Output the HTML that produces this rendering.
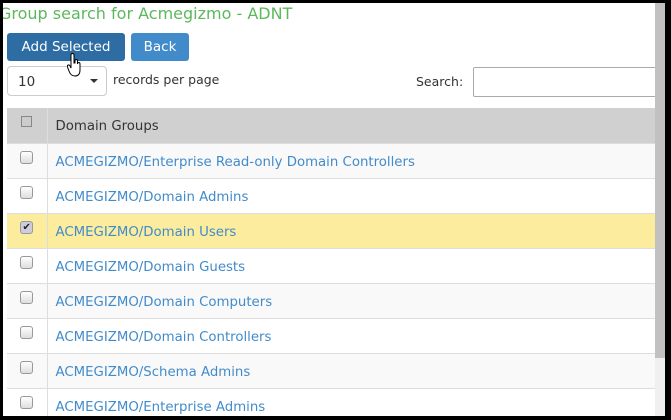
<!DOCTYPE html>
<html><head><style>
*{box-sizing:border-box;margin:0;padding:0}
body{width:671px;height:420px;overflow:hidden;background:#000;font-family:"DejaVu Sans","Liberation Sans",sans-serif;position:relative}
.page{position:absolute;left:3px;top:3px;width:652px;height:413px;background:#fff;overflow:hidden}
.sb{position:absolute;left:655px;top:3px;width:10px;height:413px;background:#f0f0f0}
.sb div{height:355px;background:#c1c1c1}
h1{position:absolute;left:-4px;top:1px;font-size:16px;font-weight:normal;color:#5cb85c;white-space:nowrap}
.btn{position:absolute;top:30px;height:28px;color:#fff;font-size:13.5px;line-height:29px;text-align:center;border-radius:3px}
.sel{position:absolute;left:4px;top:63px;width:100px;height:30px;border:1px solid #ccc;border-radius:4px;font-size:13.5px;line-height:30px;padding-left:10px;color:#333}
.sel:after{content:"";position:absolute;left:82px;top:12px;border:4px solid transparent;border-top:4px solid #333}
.lbl{position:absolute;font-size:12.5px;color:#333}
.search{position:absolute;left:470px;top:64px;width:190px;height:30px;border:1px solid #aaa;border-radius:2px}
table{position:absolute;left:4px;top:105px;width:660px;border-collapse:collapse}
td{height:35px;border-top:1px solid #ddd;font-size:13.3px;color:#428bca;padding-left:8px;padding-top:3px}
td:first-child{width:40px;border-right:1px solid #ddd;padding:0;text-align:center}
tr.h td{background:#d0d0d0;color:#333;border-top:none}
tr.o td{background:#f9f9f9}
tr.y td{background:#fcec9e}
.cb{display:inline-block;width:13px;height:13px;border:1px solid #999;border-radius:3px;background:linear-gradient(#fff,#ddd);vertical-align:middle;position:relative;margin-top:-6px}
</style></head><body>
<div class="page">
<h1>Group search for Acmegizmo - ADNT</h1>
<div class="btn" style="left:4px;width:118px;background:#2e6da4">Add Selected</div>
<div class="btn" style="left:128px;width:58px;background:#428bca">Back</div>
<div class="sel">10</div>
<div class="lbl" style="left:110px;top:69px">records per page</div>
<div class="lbl" style="left:413px;top:71px">Search:</div>
<div class="search"></div>
<table>
<tr class="h"><td><span class="cb" style="background:#ccc;border-color:#888;border-radius:0;width:11px;height:11px"></span></td><td>Domain Groups</td></tr>
<tr class="o"><td><span class="cb"></span></td><td>ACMEGIZMO/Enterprise Read-only Domain Controllers</td></tr>
<tr><td><span class="cb"></span></td><td>ACMEGIZMO/Domain Admins</td></tr>
<tr class="y"><td><span class="cb" style="font-size:10px;line-height:11px;color:#222;background:#ccd">✔</span></td><td>ACMEGIZMO/Domain Users</td></tr>
<tr><td><span class="cb"></span></td><td>ACMEGIZMO/Domain Guests</td></tr>
<tr class="o"><td><span class="cb"></span></td><td>ACMEGIZMO/Domain Computers</td></tr>
<tr><td><span class="cb"></span></td><td>ACMEGIZMO/Domain Controllers</td></tr>
<tr class="o"><td><span class="cb"></span></td><td>ACMEGIZMO/Schema Admins</td></tr>
<tr><td><span class="cb"></span></td><td>ACMEGIZMO/Enterprise Admins</td></tr>
</table>
<svg style="position:absolute;left:64px;top:50px" width="16" height="26" viewBox="0 0 16 26"><path d="M4 2 C4 0 7 0 7 2 L7 10 L8 10 L8 8 C8 6 10.5 6 10.5 8 L10.5 11 C10.5 9 13 9 13 11 L13 17 C13 21 11 23 8 23 C5 23 3 21 2 18 L0.5 14 C0 12 2 11 3 13 L4 15 Z" fill="#fff" stroke="#000" stroke-width="1"/></svg>
</div>
<div class="sb"><div></div></div>
</body></html>
